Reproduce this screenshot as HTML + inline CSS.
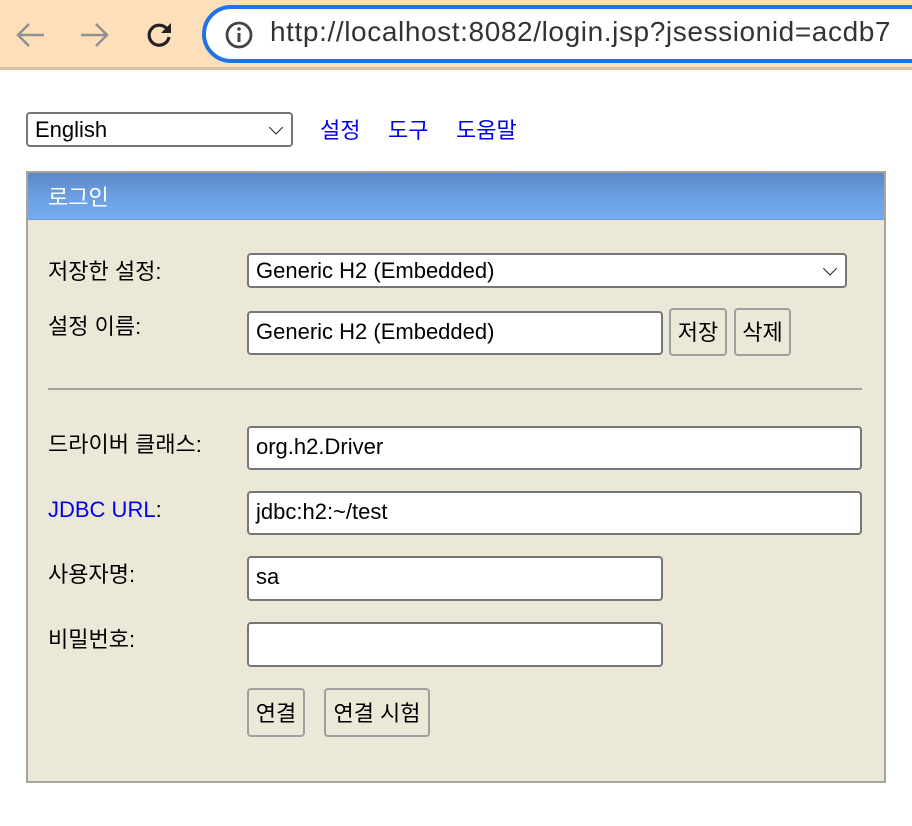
<!DOCTYPE html>
<html><head><meta charset="utf-8"><style>
*{box-sizing:border-box;margin:0;padding:0}
body{width:912px;height:826px;background:#fff;position:relative;overflow:hidden;font-family:"Liberation Sans","Noto Sans CJK KR","NanumGothic",sans-serif;font-size:22px;color:#000}
.a{position:absolute}
.bar{left:0;top:0;width:912px;height:70px;background:#fde0bb;border-bottom:3px solid #d9c0a0}
.url{left:202px;top:5px;width:760px;height:58px;border:4px solid #1f73e6;border-radius:29px;background:#fff}
.urlt{left:270px;top:16px;font-size:28px;letter-spacing:0.6px;color:#333;white-space:nowrap}
.lbl{left:48px;line-height:26px;white-space:nowrap}
.in{background:#fff;border:2px solid #767676;border-radius:4px;padding-left:7px;line-height:38px;font-size:22px;white-space:nowrap;overflow:hidden}
.btn{background:#ebe8d8;border:2px solid #a0a0a0;border-radius:4px;text-align:center;font-size:22px}
.chev{position:absolute;right:10px;top:50%;width:10px;height:10px;border-right:1.8px solid #222;border-bottom:1.8px solid #222;transform:translateY(-75%) rotate(45deg)}
a{color:#0000ee;text-decoration:none}
</style></head><body>
<div class="a bar"></div>
<svg class="a" style="left:14px;top:20px" width="34" height="30" viewBox="0 0 34 30"><path d="M30 15H5M15 4L4 15l11 11" fill="none" stroke="#909090" stroke-width="2.5"/></svg>
<svg class="a" style="left:78px;top:20px" width="34" height="30" viewBox="0 0 34 30"><path d="M3 15h25M18 4l11 11-11 11" fill="none" stroke="#909090" stroke-width="2.5"/></svg>
<svg class="a" style="left:144px;top:20px" width="30" height="30" viewBox="0 0 30 30"><path d="M23 9A10 10 0 1 0 25 17" fill="none" stroke="#222" stroke-width="3.2"/><path d="M27 3v10H17z" fill="#222"/></svg>
<div class="a url"></div>
<svg class="a" style="left:224px;top:20px" width="30" height="30" viewBox="0 0 30 30"><circle cx="15" cy="15" r="12" fill="none" stroke="#444" stroke-width="2.8"/><rect x="13.5" y="13" width="3" height="9" fill="#444"/><circle cx="15" cy="9" r="1.8" fill="#444"/></svg>
<div class="a urlt">http://localhost:8082/login.jsp?jsessionid=acdb7</div>

<div class="a in" style="left:26px;top:112px;width:267px;height:35px;line-height:31px;border-color:#777">English<span class="chev"></span></div>
<div class="a" style="left:320px;top:118px;line-height:26px"><a>설정</a></div>
<div class="a" style="left:388px;top:118px;line-height:26px"><a>도구</a></div>
<div class="a" style="left:456px;top:118px;line-height:26px"><a>도움말</a></div>

<div class="a" style="left:26px;top:171px;width:860px;height:612px;background:#ebe8d8;border:2px solid #a9a698"></div>
<div class="a" style="left:28px;top:173px;width:856px;height:47px;background:linear-gradient(#5b88c9,#6a9ee0 50%,#74aef2);border-bottom:1px solid #6a9ad8"></div>
<div class="a lbl" style="left:48px;top:185px;color:#fff">로그인</div>

<div class="a lbl" style="top:259px">저장한 설정:</div>
<div class="a in" style="left:247px;top:253px;width:600px;height:35px;line-height:31px">Generic H2 (Embedded)<span class="chev"></span></div>

<div class="a lbl" style="top:314px">설정 이름:</div>
<div class="a in" style="left:247px;top:311px;width:416px;height:44px">Generic H2 (Embedded)</div>
<div class="a btn" style="left:669px;top:308px;width:58px;height:48px;line-height:46px">저장</div>
<div class="a btn" style="left:734px;top:308px;width:57px;height:48px;line-height:46px">삭제</div>

<div class="a" style="left:48px;top:388px;width:814px;height:2px;background:#a3a3a0"></div>

<div class="a lbl" style="top:432px">드라이버 클래스:</div>
<div class="a in" style="left:247px;top:426px;width:615px;height:44px">org.h2.Driver</div>

<div class="a lbl" style="top:497px"><a>JDBC URL</a>:</div>
<div class="a in" style="left:247px;top:491px;width:615px;height:44px">jdbc:h2:~/test</div>

<div class="a lbl" style="top:562px">사용자명:</div>
<div class="a in" style="left:247px;top:556px;width:416px;height:45px">sa</div>

<div class="a lbl" style="top:627px">비밀번호:</div>
<div class="a in" style="left:247px;top:622px;width:416px;height:45px"></div>

<div class="a btn" style="left:247px;top:688px;width:58px;height:49px;line-height:47px">연결</div>
<div class="a btn" style="left:324px;top:688px;width:106px;height:49px;line-height:47px">연결 시험</div>
</body></html>
